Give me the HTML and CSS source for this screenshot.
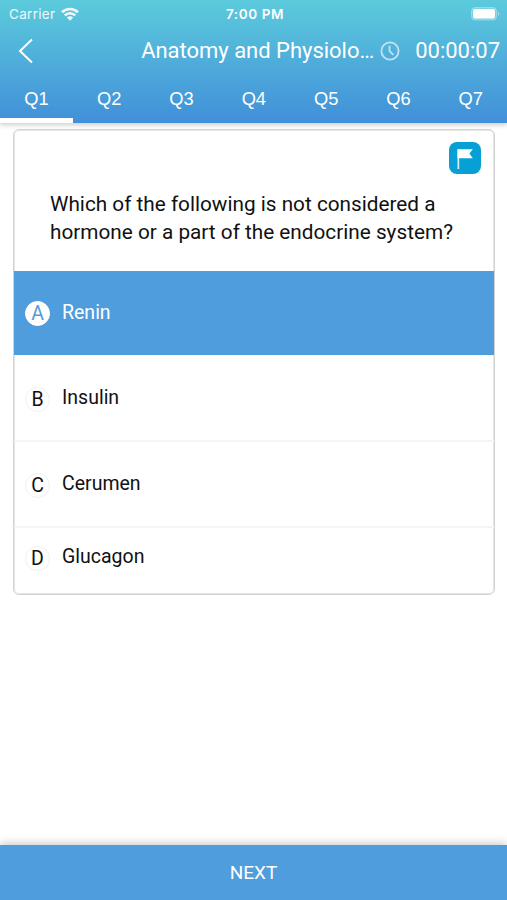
FILE: index.html
```html
<!DOCTYPE html>
<html lang="en">
<head>
    <meta charset="UTF-8">
    <meta name="viewport" content="width=device-width, initial-scale=1.0">
    <title>Anatomy and Physiology</title>
    <link rel="stylesheet" href="styles.css">
</head>
<body>

    <header class="header">
        <div class="status-bar">
            <div class="carrier">
                <span>Carrier</span>
                <svg class="wifi" viewBox="0 0 18 14" width="18" height="14">
                    <path d="M1 5.2a11.5 11.5 0 0 1 16 0M3.8 8.4a7.4 7.4 0 0 1 10.4 0" fill="none" stroke="#fff" stroke-width="2.6"/>
                    <path d="M9 13.8l-3.2-3.2a4.5 4.5 0 0 1 6.4 0z" fill="#fff"/>
                </svg>
            </div>
            <span class="time">7:00 PM</span>
            <svg class="battery" viewBox="0 0 30 14" width="30" height="14">
                <rect x="0.5" y="0.5" width="25" height="12.5" rx="3.5" fill="#fff" fill-opacity=".2" stroke="#fff" stroke-opacity=".3"/>
                <rect x="2" y="2" width="22" height="9.5" rx="2" fill="#fff"/>
                <path d="M27 4.8a2.2 2.2 0 0 1 0 4z" fill="#fff" fill-opacity=".5"/>
            </svg>
        </div>

        <div class="nav-bar">
            <svg class="back" viewBox="0 0 16 26" width="16" height="26">
                <path d="M14 1.5L2 13l12 11.5" fill="none" stroke="#fff" stroke-width="2"/>
            </svg>
            <h1 class="title">Anatomy and Physiolo…</h1>
            <svg class="clock" viewBox="0 0 20 20" width="20" height="20">
                <circle cx="10" cy="10" r="8.6" fill="none" stroke="#fff" stroke-width="1.8"/>
                <path d="M9.5 4.8V10l3.8 3.8" fill="none" stroke="#fff" stroke-width="1.8"/>
            </svg>
            <span class="timer">00:00:07</span>
        </div>

        <nav class="tabs">
            <span class="tab active">Q1</span>
            <span class="tab">Q2</span>
            <span class="tab">Q3</span>
            <span class="tab">Q4</span>
            <span class="tab">Q5</span>
            <span class="tab">Q6</span>
            <span class="tab">Q7</span>
        </nav>
    </header>

    <main class="card">
        <div class="question">
            <button type="button" class="flag" aria-label="Flag">
                <svg viewBox="0 0 32 32" width="32" height="32">
                    <path d="M8.5 7h1.7v20H8.5z" fill="#fff" fill-opacity=".85"/>
                    <path d="M8.5 7.2h15.3l-3.4 4.4 3.4 4.6H8.5z" fill="#fff"/>
                </svg>
            </button>
            <p class="question-text">Which of the following is not considered a<br>hormone or a part of the endocrine system?</p>
        </div>

        <div class="answer selected">
            <span class="letter">A</span>
            <span class="answer-text">Renin</span>
        </div>
        <div class="answer">
            <span class="letter">B</span>
            <span class="answer-text">Insulin</span>
        </div>
        <div class="answer">
            <span class="letter">C</span>
            <span class="answer-text">Cerumen</span>
        </div>
        <div class="answer last">
            <span class="letter">D</span>
            <span class="answer-text">Glucagon</span>
        </div>
    </main>

    <button type="button" class="next">NEXT</button>

</body>
</html>
```
FILE: styles.css
```css
* {
    box-sizing: border-box;
}

body {
    display: flex;
    flex-direction: column;
    height: 900px;
    margin: 0;
    font-family: Roboto, "Liberation Sans", sans-serif;
    color: #111;
    background-color: #fff;
}

.header {
    height: 123px;
    color: #fff;
    background: linear-gradient(#5ccbdc, #418fd9);
    box-shadow: 0 2px 5px rgba(0, 0, 0, 0.2);
}

.status-bar {
    display: grid;
    grid-template-columns: 1fr auto 1fr;
    align-items: center;
    height: 27px;
    padding: 0 6px 0 9px;
    font-family: Inter, "Liberation Sans", sans-serif;
}

.carrier {
    display: flex;
    align-items: center;
    gap: 6px;
    font-size: 13.5px;
    letter-spacing: 0.3px;
    opacity: 0.9;
}

.time {
    font-size: 13.5px;
    font-weight: 600;
    letter-spacing: 0.6px;
}

.battery {
    justify-self: end;
}

.nav-bar {
    display: flex;
    align-items: center;
    height: 48px;
    padding: 0 7px 0 18px;
}

.title {
    margin: 0 6px 1px auto;
    font-size: 22px;
    font-weight: 400;
    letter-spacing: -0.02px;
    white-space: nowrap;
}

.clock {
    margin-right: 15px;
    margin-bottom: 1px;
    opacity: 0.65;
}

.timer {
    margin-bottom: 1px;
    font-size: 22px;
}

.tabs {
    display: flex;
    height: 48px;
}

.tab {
    flex: 1;
    height: 48px;
    border-bottom: 5px solid transparent;
    font-family: "Liberation Sans", sans-serif;
    font-size: 18.3px;
    line-height: 47px;
    text-align: center;
}

.tab.active {
    flex: 0 0 73px;
    border-bottom-color: #fff;
}

.card {
    margin: 6px 12px 0 13px;
    border: 1px solid #d3d4d4;
    border-radius: 6px;
    background-color: #fff;
    box-shadow: inset 0 0 0 1px #e4e4e4;
}

.question {
    display: flex;
    flex-direction: column;
    height: 141px;
    padding: 12px 13px 0 36px;
}

.flag {
    align-self: flex-end;
    width: 32px;
    height: 32px;
    padding: 0;
    border: none;
    border-radius: 8px;
    background-color: #06a0d4;
}

.question-text {
    margin: 16px 0 0;
    font-size: 20.75px;
    line-height: 28px;
    white-space: nowrap;
}

.answer {
    display: flex;
    align-items: center;
    gap: 12px;
    height: 86px;
    padding-left: 11px;
    border-bottom: 2px solid #f5f5f5;
    font-size: 19.5px;
}

.answer-text {
    margin-bottom: 2px;
}

.answer.selected {
    height: 84px;
    margin-bottom: 1px;
    padding-bottom: 2px;
    border-bottom: none;
    color: #fff;
    background-color: #509ddd;
}

.answer.last {
    height: 66px;
    border-bottom: none;
    padding-bottom: 9px;
}

.selected .answer-text,
.last .answer-text {
    margin-bottom: 0;
}

.letter {
    width: 25px;
    height: 25px;
    margin-top: 3px;
    border: 1px solid #f1f1f1;
    border-radius: 50%;
    line-height: 24px;
    text-align: center;
}

.selected .letter {
    border-color: #fff;
    color: #509ddd;
    background-color: #fff;
}

.next {
    height: 55px;
    margin-top: auto;
    padding: 0;
    border: none;
    font-family: Roboto, "Liberation Sans", sans-serif;
    font-size: 19px;
    color: #fff;
    background-color: #509ddd;
    box-shadow: 0 -2px 8px rgba(0, 0, 0, 0.2);
}
```
